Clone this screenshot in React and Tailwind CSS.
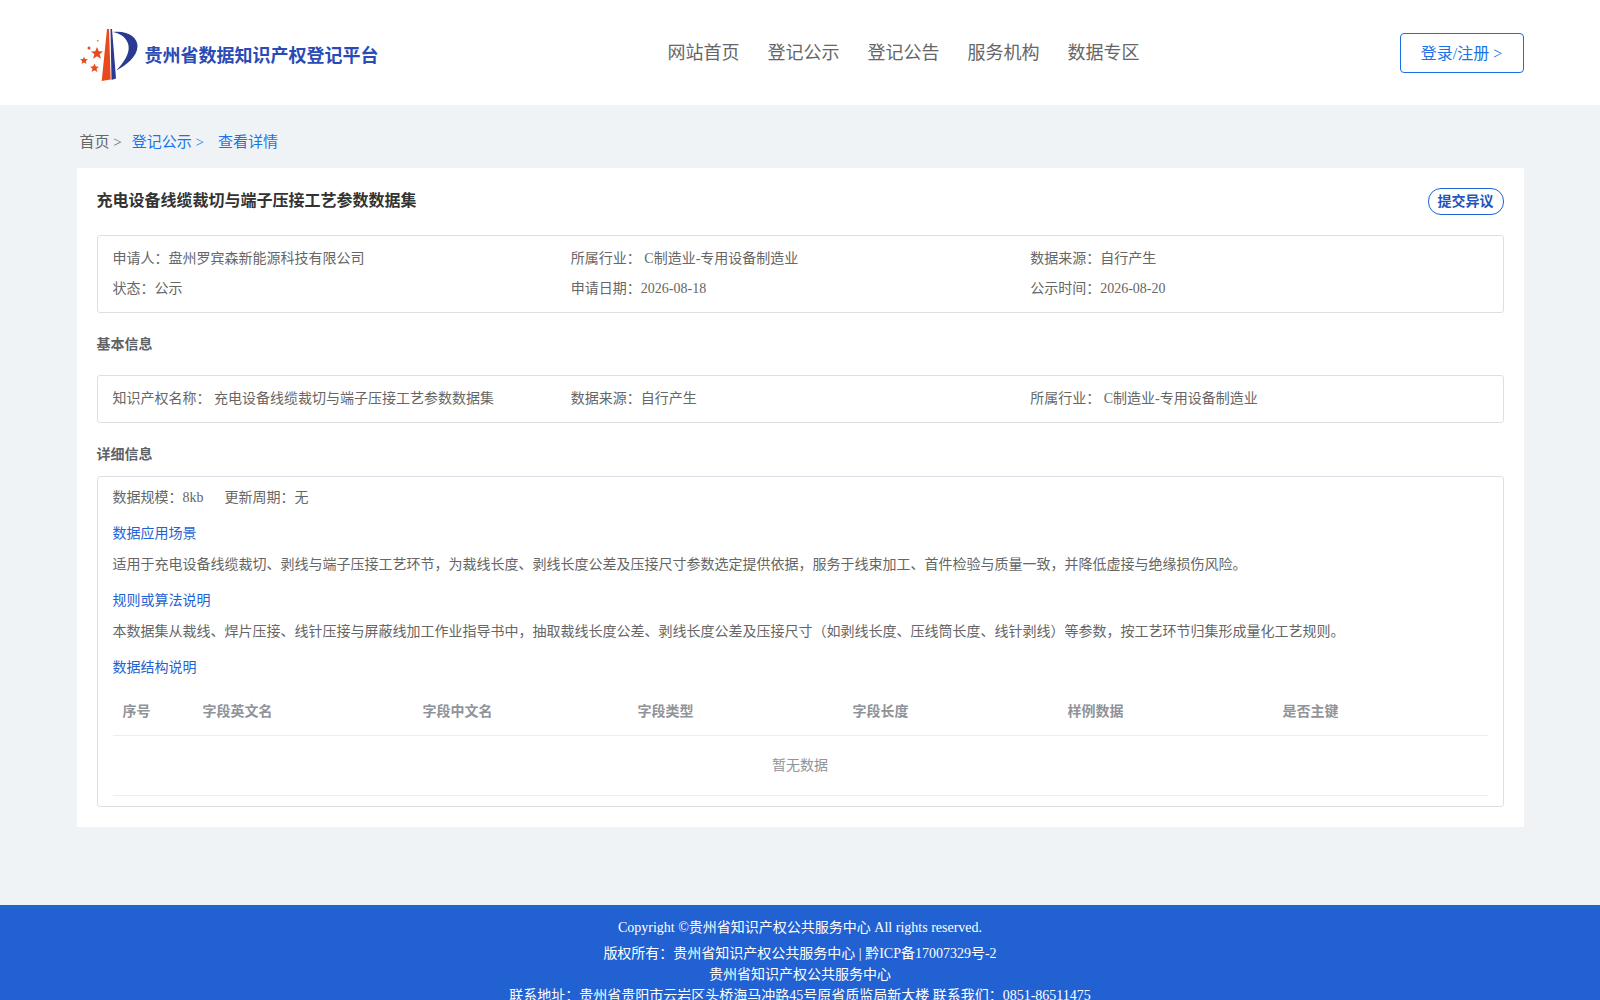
const FONT = "font-['Liberation_Serif','Noto_Sans_CJK_SC',serif]"

const NAV_ITEMS = ['网站首页', '登记公示', '登记公告', '服务机构', '数据专区']

const COLUMNS = [
  { name: '序号', width: 'w-[80px]' },
  { name: '字段英文名', width: 'w-[220px]' },
  { name: '字段中文名', width: 'w-[215px]' },
  { name: '字段类型', width: 'w-[215px]' },
  { name: '字段长度', width: 'w-[215px]' },
  { name: '样例数据', width: 'w-[215px]' },
  { name: '是否主键', width: 'w-[215px]' },
]

function Logo() {
  return (
    <svg width="70" height="65" viewBox="0 0 70 65" className="shrink-0 -mt-[7px]">
      <polygon points="32,9 34,9 35.7,59.5 26.7,61" fill="#e8491d" />
      <polygon points="35.5,9 37,9 41,58.5 36.5,60" fill="#2a3a92" />
      <path d="M38 12C52 10 63 17 62.5 26.5C62 37 51 45 41.5 50.5C48 43 55 34 53.5 25.5C52 18 46 13.5 38 12Z" fill="#2a3a92" />
      <polygon points="22,27 23.7,31.3 28,31.5 24.6,34.3 26,38.7 22,36.2 18,38.7 19.4,34.3 16,31.5 20.3,31.3" fill="#e8491d" />
      <polygon points="9,36.5 10,39 13,39.2 10.7,41 11.5,44 9,42.4 6.5,44 7.3,41 5,39.2 8,39" fill="#e8491d" />
      <polygon points="19.5,43.5 20.8,46.5 24,46.7 21.5,48.8 22.4,52 19.5,50.2 16.6,52 17.5,48.8 15,46.7 18.2,46.5" fill="#e8491d" />
      <circle cx="14" cy="28" r="1.5" fill="#e8491d" />
      <circle cx="22.7" cy="20.7" r="0.9" fill="#ee7a55" />
    </svg>
  )
}

function Header() {
  return (
    <header className="h-[105px] bg-white flex justify-center">
      <div className="w-[1447px] flex items-center">
        <div className="flex items-center w-[593px] -ml-[2px] pt-[7px]">
          <Logo />
          <span className="text-lg font-bold text-[#2a4bb5] whitespace-nowrap">贵州省数据知识产权登记平台</span>
        </div>
        <nav className="flex gap-7 text-lg text-[#666]">
          {NAV_ITEMS.map((item) => (
            <a key={item}>{item}</a>
          ))}
        </nav>
        <a className="ml-auto w-[124px] h-10 flex items-center justify-center border border-[#1a6fe0] rounded text-base text-[#1a73e8] pt-[2px]">
          登录/注册 &gt;
        </a>
      </div>
    </header>
  )
}

function Breadcrumb() {
  return (
    <div className="h-[63px] pl-[3px] flex items-center text-[15px] pt-[11px] text-[#666] whitespace-pre">
      <span>首页 &gt;</span>
      <span className="ml-[10px] text-[#1a73e8]">登记公示 &gt;</span>
      <span className="ml-[14px] text-[#1a73e8]">查看详情</span>
    </div>
  )
}

function Box({ className, children }) {
  return <div className={`border border-[#dcdfe6] rounded-[3px] px-[15px] ${className}`}>{children}</div>
}

function SubHeading({ className, children }) {
  return <div className={`leading-6 text-[#1f62d1] ${className}`}>{children}</div>
}

function FieldTable() {
  return (
    <table className="w-full table-fixed mt-[7px] border-collapse">
      <colgroup>
        {COLUMNS.map((col) => (
          <col key={col.name} className={col.width} />
        ))}
      </colgroup>
      <thead>
        <tr className="h-[48px] border-b border-[#ebeef5]">
          {COLUMNS.map((col) => (
            <th key={col.name} className="px-[10px] pt-[2px] text-left font-bold text-[#909399]">
              {col.name}
            </th>
          ))}
        </tr>
      </thead>
      <tbody>
        <tr className="h-[60px] border-b border-[#ebeef5]">
          <td colSpan={7} className="pt-[2px] text-center text-[#909399]">暂无数据</td>
        </tr>
      </tbody>
    </table>
  )
}

function Detail() {
  return (
    <div className="bg-white p-5 text-sm text-[#666]">
      <div className="flex justify-between items-start h-[27px]">
        <h1 className="text-base font-bold text-[#333] leading-[26px]">充电设备线缆裁切与端子压接工艺参数数据集</h1>
        <button className="w-[76px] h-[27px] border border-[#1f62d1] rounded-[13px] text-sm font-bold text-[#1f55b8] pt-[1px]">提交异议</button>
      </div>

      <Box className="mt-5 pt-[8px] pb-[8px] leading-[30px]">
        <div className="grid grid-cols-3">
          <div>申请人：盘州罗宾森新能源科技有限公司</div>
          <div>所属行业： C制造业-专用设备制造业</div>
          <div className="pl-[1px]">数据来源：自行产生</div>
          <div>状态：公示</div>
          <div>申请日期：2026-08-18</div>
          <div className="pl-[1px]">公示时间：2026-08-20</div>
        </div>
      </Box>

      <div className="h-[62px] pt-[1px] leading-[62px] font-bold text-[#606266]">基本信息</div>

      <Box className="h-[48px] flex items-center">
        <div className="grid grid-cols-3 w-full">
          <div>知识产权名称： 充电设备线缆裁切与端子压接工艺参数数据集</div>
          <div>数据来源：自行产生</div>
          <div className="pl-[1px]">所属行业： C制造业-专用设备制造业</div>
        </div>
      </Box>

      <div className="pt-5 pb-[9px] leading-6 font-bold text-[#606266]">详细信息</div>

      <Box className="pt-[9px] pb-[10px]">
        <div className="leading-6">
          数据规模：8kb<span className="ml-[21px]">更新周期：无</span>
        </div>
        <SubHeading className="mt-3">数据应用场景</SubHeading>
        <p className="mt-[7px] leading-6">
          适用于充电设备线缆裁切、剥线与端子压接工艺环节，为裁线长度、剥线长度公差及压接尺寸参数选定提供依据，服务于线束加工、首件检验与质量一致，并降低虚接与绝缘损伤风险。
        </p>
        <SubHeading className="mt-3">规则或算法说明</SubHeading>
        <p className="mt-[7px] leading-6">
          本数据集从裁线、焊片压接、线针压接与屏蔽线加工作业指导书中，抽取裁线长度公差、剥线长度公差及压接尺寸（如剥线长度、压线筒长度、线针剥线）等参数，按工艺环节归集形成量化工艺规则。
        </p>
        <SubHeading className="mt-3">数据结构说明</SubHeading>
        <FieldTable />
      </Box>
    </div>
  )
}

function Footer() {
  return (
    <footer className="mt-[78px] bg-[#2161d2] text-white text-sm text-center pt-3 pb-2">
      <div className="leading-[22px]">Copyright ©贵州省知识产权公共服务中心 All rights reserved.</div>
      <div className="mt-[4px] leading-[21px]">版权所有：贵州省知识产权公共服务中心 | 黔ICP备17007329号-2</div>
      <div className="leading-[21px]">贵州省知识产权公共服务中心</div>
      <div className="leading-[21px]">联系地址：贵州省贵阳市云岩区头桥海马冲路45号原省质监局新大楼 联系我们：0851-86511475</div>
    </footer>
  )
}

export default function App() {
  return (
    <div className={`min-h-screen bg-[#eff3f6] ${FONT}`}>
      <Header />
      <div className="w-[1447px] mx-auto">
        <Breadcrumb />
        <Detail />
      </div>
      <Footer />
    </div>
  )
}
